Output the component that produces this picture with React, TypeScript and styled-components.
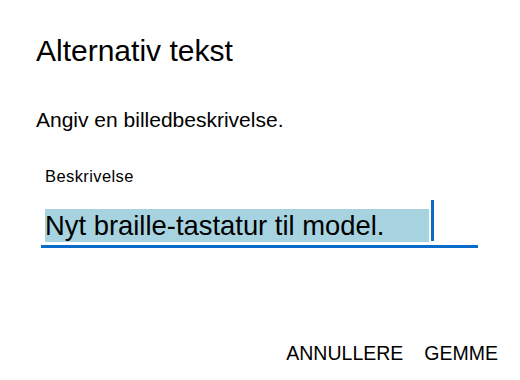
import styled, { createGlobalStyle } from 'styled-components';

const GlobalStyle = createGlobalStyle`
    html, body {
        margin: 0;
        padding: 0;
        background: #ffffff;
    }

    body {
        font-family: 'Liberation Sans', Arial, sans-serif;
        color: #000000;
    }
`;

const App: React.FC = () => {
    return (
        <>
            <GlobalStyle />
            <Dialog>
                <Title>Alternativ tekst</Title>
                <Prompt>Angiv en billedbeskrivelse.</Prompt>
                <Field>
                    <FieldLabel>Beskrivelse</FieldLabel>
                    <InputBox>
                        <SelectedText>Nyt braille-tastatur til model.</SelectedText>
                        <Caret />
                    </InputBox>
                </Field>
                <Footer>
                    <TextButton>ANNULLERE</TextButton>
                    <TextButton>GEMME</TextButton>
                </Footer>
            </Dialog>
        </>
    );
};

export default App;

const Dialog = styled.div`
    width: 520px;
    height: 380px;
    box-sizing: border-box;
    padding: 36px 0 0 36px;

    display: flex;
    flex-direction: column;
`;

const Title = styled.h1`
    margin: 0;
    font-size: 30px;
    font-weight: 400;
    line-height: 30px;
`;

const Prompt = styled.p`
    margin: 43px 0 0;
    font-size: 21px;
    line-height: 21px;
`;

const Field = styled.div`
    margin: 38px 0 0 5px;
    width: 437px;

    display: flex;
    flex-direction: column;
`;

const FieldLabel = styled.label`
    padding-left: 4px;
    font-size: 16.5px;
    line-height: 17px;
    letter-spacing: 0.4px;
`;

const InputBox = styled.div`
    margin-top: 15px;
    height: 48px;
    box-sizing: border-box;
    padding: 0 0 3px 4px;
    border-bottom: 3px solid #0a6bc9;

    display: flex;
    align-items: flex-end;
`;

const SelectedText = styled.span`
    width: 384px;
    height: 33px;
    font-size: 27.4px;
    line-height: 33px;
    background: #a6d3df;
    white-space: nowrap;
`;

const Caret = styled.span`
    width: 3px;
    height: 41px;
    margin: 0 0 1px 2px;
    background: #0a6bc9;
`;

const Footer = styled.div`
    margin-top: auto;
    padding: 0 22px 17px 0;

    display: flex;
    justify-content: flex-end;
    gap: 21px;
`;

const TextButton = styled.button`
    padding: 0;
    border: none;
    background: none;
    font-family: 'Liberation Sans', Arial, sans-serif;
    font-size: 19.5px;
    line-height: 20px;
    color: #000000;
    cursor: pointer;
`;
